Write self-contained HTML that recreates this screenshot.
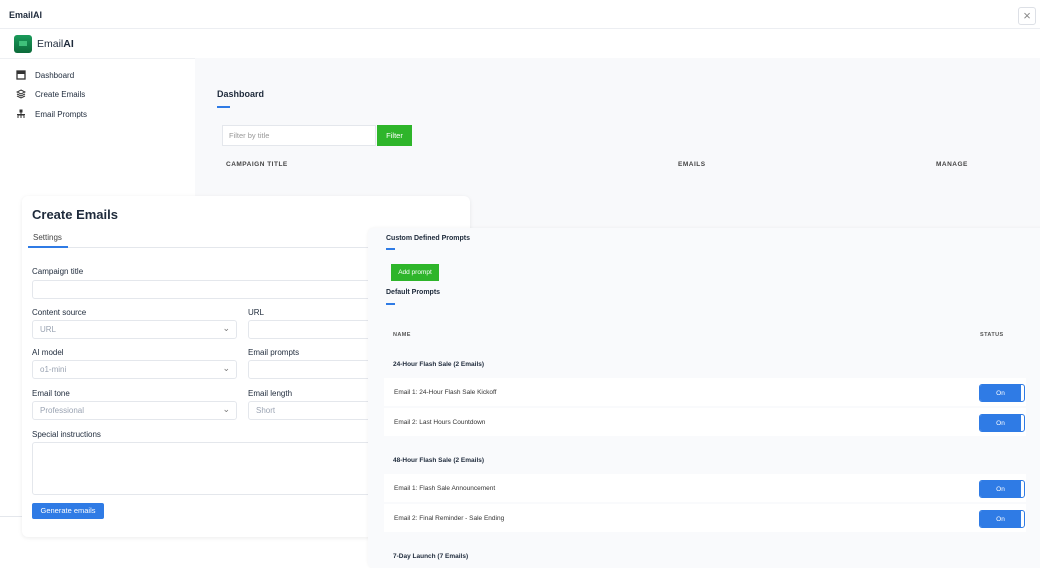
<!DOCTYPE html>
<html><head><style>
*{box-sizing:border-box;margin:0;padding:0}
body{width:1040px;height:560px;overflow:hidden;background:#fff;font-family:"Liberation Sans",sans-serif;color:#1e2a3b;position:relative}
.abs{position:absolute}
.lbl{font-size:8px;color:#1e2a3b}
.inp{position:absolute;border:1px solid #e4e7ec;border-radius:3px;background:#fff;font-size:8px;color:#9aa3b2;padding:0 7px;display:flex;align-items:center}
.sel:after{content:"⌄";position:absolute;right:6px;top:2px;font-size:9px;color:#777}
.row{position:absolute;left:16px;width:642px;height:28px;background:#fff;font-size:6.5px;color:#333;padding-left:10px;display:flex;align-items:center}
.tog{position:absolute;right:0;top:7px;width:44px;height:16px;background:#2f7be5;border-radius:2px;color:#fff;font-size:6.5px;display:flex;align-items:center;justify-content:center;border-right:3px solid #fff;outline:1px solid #2f7be5}
.grp{position:absolute;left:25px;font-size:6.5px;font-weight:bold;color:#1e2a3b}
</style></head><body>
<div class="abs" style="left:0;top:0;width:1040px;height:29px;border-bottom:1px solid #eceef2;background:#fff"></div>
<div class="abs" style="left:9px;top:10px;font-size:9px;font-weight:bold">EmailAI</div>
<div class="abs" style="left:1018px;top:7px;width:18px;height:18px;border:1px solid #dde0e6;border-radius:3px;color:#888;font-size:13px;text-align:center;line-height:16px">×</div>
<div class="abs" style="left:14px;top:35px;width:18px;height:18px;border-radius:3px;background:linear-gradient(#1a9a5a,#0c6a3a)"><div style="margin:6px 5px;width:8px;height:5px;background:#3fc07a"></div></div>
<div class="abs" style="left:37px;top:38px;font-size:10.5px">Email<b>AI</b></div>
<div class="abs" style="left:0;top:58px;width:1040px;height:1px;background:#eef0f3"></div>
<div class="abs" style="left:195px;top:58px;width:845px;height:180px;background:#f8f9fb"></div>
<svg class="abs" style="left:16px;top:70px" width="10" height="10"><rect x="1" y="1" width="8" height="8" fill="none" stroke="#333" stroke-width="1.3"/><rect x="1" y="1" width="8" height="3" fill="#333"/></svg>
<div class="abs" style="left:35px;top:71px;font-size:8px">Dashboard</div>
<svg class="abs" style="left:16px;top:89px" width="10" height="10"><path d="M5 1L9 3L5 5L1 3Z M1 5L5 7L9 5 M1 7L5 9L9 7" fill="none" stroke="#333" stroke-width="1"/></svg>
<div class="abs" style="left:35px;top:90px;font-size:8px">Create Emails</div>
<svg class="abs" style="left:16px;top:109px" width="10" height="10"><path d="M5 1V4 M2 9V6H8V9 M5 4V9 M1 5.5H9" fill="none" stroke="#333" stroke-width="1"/><rect x="3.5" y="0.5" width="3" height="3" fill="#333"/></svg>
<div class="abs" style="left:35px;top:110px;font-size:8px">Email Prompts</div>
<div class="abs" style="left:217px;top:89px;font-size:9px;font-weight:bold">Dashboard</div>
<div class="abs" style="left:217px;top:106px;width:13px;height:2px;background:#2f7be5"></div>
<div class="abs" style="left:222px;top:125px;width:154px;height:21px;background:#fff;border:1px solid #e4e7ec;font-size:7.5px;color:#999;padding:5px 6px">Filter by title</div>
<div class="abs" style="left:377px;top:125px;width:35px;height:21px;background:#2eb52a;color:#fff;font-size:7.5px;text-align:center;line-height:21px">Filter</div>
<div class="abs" style="left:226px;top:161px;font-size:6.5px;font-weight:bold;color:#444;letter-spacing:.5px">CAMPAIGN TITLE</div>
<div class="abs" style="left:678px;top:161px;font-size:6.5px;font-weight:bold;color:#444;letter-spacing:.5px">EMAILS</div>
<div class="abs" style="left:936px;top:161px;font-size:6.5px;font-weight:bold;color:#444;letter-spacing:.5px">MANAGE</div>
<div class="abs" style="left:0;top:516px;width:22px;height:1px;background:#e4e7ec"></div>
<div class="abs" style="left:22px;top:196px;width:448px;height:341px;background:#fff;border-radius:6px;box-shadow:0 1px 4px rgba(0,0,0,.08)">
<div class="abs" style="left:10px;top:11px;font-size:13px;font-weight:bold">Create Emails</div>
<div class="abs" style="left:11px;top:37px;font-size:8px;color:#444">Settings</div>
<div class="abs" style="left:6px;top:51px;width:440px;height:1px;background:#e4e7ec"></div>
<div class="abs" style="left:6px;top:50px;width:40px;height:2px;background:#2f7be5"></div>
<div class="abs lbl" style="left:10px;top:71px">Campaign title</div>
<div class="inp" style="left:10px;top:84px;width:440px;height:19px"></div>
<div class="abs lbl" style="left:10px;top:112px">Content source</div>
<div class="inp sel" style="left:10px;top:124px;width:205px;height:19px">URL</div>
<div class="abs lbl" style="left:226px;top:112px">URL</div>
<div class="inp" style="left:226px;top:124px;width:224px;height:19px"></div>
<div class="abs lbl" style="left:10px;top:152px">AI model</div>
<div class="inp sel" style="left:10px;top:164px;width:205px;height:19px">o1-mini</div>
<div class="abs lbl" style="left:226px;top:152px">Email prompts</div>
<div class="inp" style="left:226px;top:164px;width:224px;height:19px"></div>
<div class="abs lbl" style="left:10px;top:193px">Email tone</div>
<div class="inp sel" style="left:10px;top:205px;width:205px;height:19px">Professional</div>
<div class="abs lbl" style="left:226px;top:193px">Email length</div>
<div class="inp" style="left:226px;top:205px;width:224px;height:19px">Short</div>
<div class="abs lbl" style="left:10px;top:234px">Special instructions</div>
<div class="inp" style="left:10px;top:246px;width:440px;height:53px"></div>
<div class="abs" style="left:10px;top:307px;width:72px;height:16px;background:#2f7be5;border-radius:2px;color:#fff;font-size:7.5px;text-align:center;line-height:16px">Generate emails</div>
</div>
<div class="abs" style="left:368px;top:228px;width:680px;height:340px;background:#f9fafc;border-radius:6px;box-shadow:0 0 3px rgba(0,0,0,.06)">
<div class="abs" style="left:18px;top:7px;font-size:7px;font-weight:bold">Custom Defined Prompts</div>
<div class="abs" style="left:18px;top:20px;width:9px;height:2px;background:#2f7be5"></div>
<div class="abs" style="left:23px;top:36px;width:48px;height:17px;background:#2eb52a;color:#fff;font-size:6.5px;text-align:center;line-height:17px">Add prompt</div>
<div class="abs" style="left:18px;top:61px;font-size:7px;font-weight:bold">Default Prompts</div>
<div class="abs" style="left:18px;top:75px;width:9px;height:2px;background:#2f7be5"></div>
<div class="abs" style="left:25px;top:104px;font-size:5.5px;font-weight:bold;color:#555;letter-spacing:.4px">NAME</div>
<div class="abs" style="left:612px;top:104px;font-size:5.5px;font-weight:bold;color:#555;letter-spacing:.4px">STATUS</div>
<div class="grp" style="top:133px">24-Hour Flash Sale (2 Emails)</div>
<div class="row" style="top:150px">Email 1: 24-Hour Flash Sale Kickoff<div class="tog" style="right:2px">On</div></div>
<div class="row" style="top:180px">Email 2: Last Hours Countdown<div class="tog" style="right:2px">On</div></div>
<div class="grp" style="top:229px">48-Hour Flash Sale (2 Emails)</div>
<div class="row" style="top:246px">Email 1: Flash Sale Announcement<div class="tog" style="right:2px">On</div></div>
<div class="row" style="top:276px">Email 2: Final Reminder - Sale Ending<div class="tog" style="right:2px">On</div></div>
<div class="grp" style="top:325px">7-Day Launch (7 Emails)</div>
</div>
</body></html>
